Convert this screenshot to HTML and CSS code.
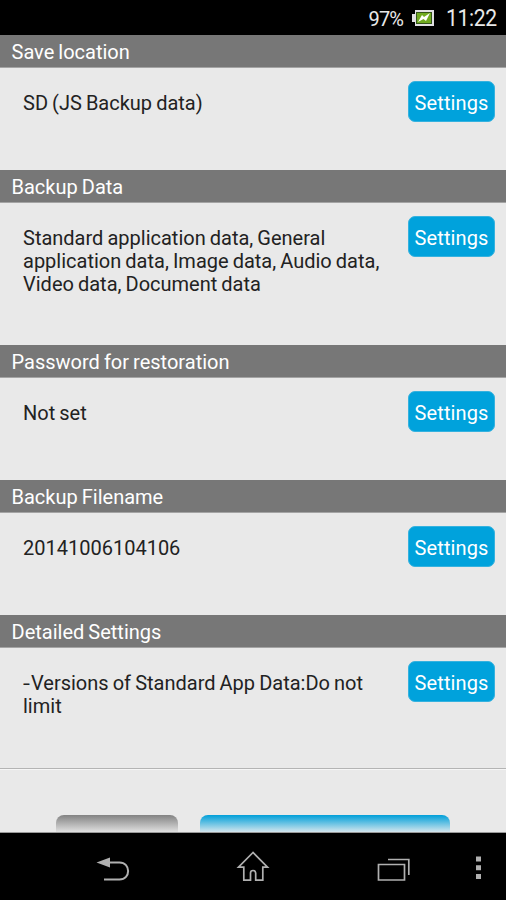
FILE: index.html
```html
<!DOCTYPE html>
<html lang="en">
<head>
<meta charset="utf-8">
<title>Backup settings</title>
<link rel="stylesheet" href="styles.css">
</head>
<body>
<div class="screen">
  <header class="status">
    <span class="percent">97%</span>
    <svg class="battery" width="22" height="16" viewBox="0 0 22 16">
      <path d="M3 0H22V16H3V12H0V4H3Z" fill="#e2e0e4"/>
      <rect x="4" y="2" width="16" height="12" fill="#35541b"/>
      <rect x="5" y="3" width="14" height="10" fill="#70aa20"/>
      <path d="M6 12L10 5L12 7L18 3L14 11L11.500 9Z" fill="#fff"/>
    </svg>
    <span class="clock">11:22</span>
  </header>
  <main class="content">
    <section class="group">
      <h2 class="heading">Save location</h2>
      <div class="row"><p class="value">SD (JS Backup data)</p><button class="settings">Settings</button></div>
    </section>
    <section class="group group-data">
      <h2 class="heading">Backup Data</h2>
      <div class="row"><p class="value">Standard application data, General<br>application data, Image data, Audio data,<br>Video data, Document data</p><button class="settings">Settings</button></div>
    </section>
    <section class="group">
      <h2 class="heading">Password for restoration</h2>
      <div class="row"><p class="value">Not set</p><button class="settings">Settings</button></div>
    </section>
    <section class="group">
      <h2 class="heading">Backup Filename</h2>
      <div class="row"><p class="value">20141006104106</p><button class="settings">Settings</button></div>
    </section>
    <section class="group group-details">
      <h2 class="heading">Detailed Settings</h2>
      <div class="row"><p class="value"><span class="dash">-</span>Versions of Standard App Data:Do not<br>limit</p><button class="settings">Settings</button></div>
    </section>
    <div class="actions">
      <div class="action action-gray"></div>
      <div class="action action-blue"></div>
    </div>
  </main>
  <nav class="nav">
    <svg width="506" height="67" viewBox="0 0 506 67" fill="none" stroke="#b0b0b0" stroke-width="2">
      <path d="M109 29.500H119.500C131 29.500 131 46.500 119.500 46.500H104"/>
      <path d="M96.500 29.500L110 24.500V34.500Z" fill="#b0b0b0" stroke="none"/>
      <path d="M253 19.500L238.500 34.200H243.800V47.200H250.500V40Q250.500 37.500 253 37.500T255.700 40V47.200H262.800V34.200H267.500Z" stroke-width="1.700"/>
      <path d="M378.500 31.500H404.500V47H378.500ZM388 26.500H408.800V42" stroke-width="1.700"/>
      <path d="M476 23.500h5v5h-5zM476 32.300h5v5h-5zM476 41h5v5h-5z" fill="#b0b0b0" stroke="none"/>
    </svg>
  </nav>
</div>
</body>
</html>
```

FILE: styles.css
```css
* { box-sizing: border-box; }
body { margin: 0; background: #000; font-family: Roboto, "Liberation Sans", sans-serif; }
.screen { width: 506px; height: 900px; display: flex; flex-direction: column; overflow: hidden; }
.status { height: 35px; display: flex; align-items: center; justify-content: flex-end; padding-right: 9px; color: #e8e8e8; background: #000; }
.percent { font-size: 20px; letter-spacing: -0.8px; line-height: 24px; padding-top: 2px; }
.battery { margin: 1px 11px 0 9px; }
.clock { margin-left: -6px; font-size: 24px; line-height: 28px; letter-spacing: -0.4px; transform: scaleX(0.88); transform-origin: right; }
.content { height: 798px; background: #e9e9e9; overflow: hidden; border-bottom: 1px solid #999; }
.group { height: 135px; }
.group-data { height: 175px; }
.group-details { height: 153px; }
.heading { margin: 0; height: 33px; padding-left: 11.500px; background: #777; border-bottom: 1px solid #a4a4a4; color: #fff; font-size: 20px; font-weight: 400; line-height: 34px; word-spacing: -0.9px; }
.row { display: flex; justify-content: space-between; align-items: flex-start; padding: 13px 11px 0 23px; }
.value { margin: 11px 0 0; color: #222; font-size: 20px; line-height: 23px; word-spacing: -0.9px; white-space: nowrap; }
.dash { display: inline-block; width: 8px; transform: scaleX(1.25); transform-origin: left; }
.settings { width: 87px; height: 41px; padding: 3px 0 0; border: 1px solid #35b2df; border-radius: 7px; background: #00a2dc; color: #fff; font: 20px/23px Roboto, sans-serif; letter-spacing: 0.1px; }
.actions { display: flex; gap: 22px; height: 80px; padding: 46px 56px 0; border-top: 1px solid #b4b4b4; box-shadow: inset 0 1px #f6f6f6; }
.action { height: 34px; border-radius: 8px; }
.action-gray { width: 122px; background: linear-gradient(#828282, #e0e0e0 17px); }
.action-blue { width: 250px; background: linear-gradient(#009fd9, #d4e6ed 17px); }
.nav { height: 67px; background: #000; }
.nav svg { display: block; }
```
